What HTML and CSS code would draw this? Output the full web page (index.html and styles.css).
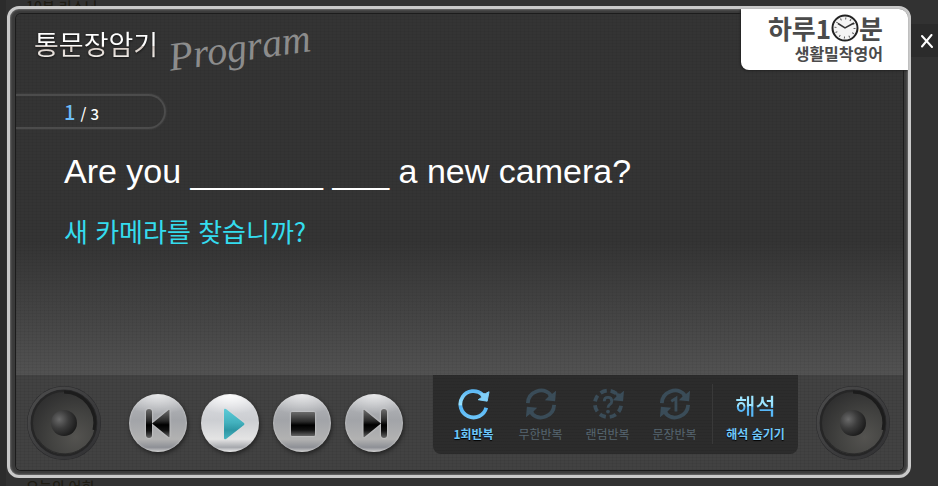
FILE: index.html
```html
<!DOCTYPE html>
<html lang="ko">
<head>
<meta charset="utf-8">
<title>통문장암기 Program</title>
<link rel="stylesheet" href="styles.css">
</head>
<body>
<div class="backdrop">
  <span class="backdrop-top">10분 리스닝</span>
  <span class="backdrop-bottom">오늘의 어휘</span>
</div>
<svg class="defs" width="0" height="0" aria-hidden="true">
  <defs>
    <linearGradient id="blue" x1="0" y1="0" x2="0" y2="1"><stop offset="0" stop-color="#5cb8f4"/><stop offset=".52" stop-color="#9ce4ff"/><stop offset=".56" stop-color="#52b4f6"/><stop offset="1" stop-color="#6cc4f8"/></linearGradient>
    <linearGradient id="ink" x1="0" y1="0" x2="0" y2="1"><stop offset="0" stop-color="#6c6c6c"/><stop offset=".4" stop-color="#2a2a2a"/><stop offset=".55" stop-color="#000"/><stop offset=".75" stop-color="#111"/><stop offset="1" stop-color="#666"/></linearGradient>
    <linearGradient id="teal" x1="0" y1="0" x2="0" y2="1"><stop offset="0" stop-color="#5ccbd8"/><stop offset=".45" stop-color="#43b1be"/><stop offset=".7" stop-color="#2d96a4"/><stop offset="1" stop-color="#48b4c0"/></linearGradient>
    <radialGradient id="cone" cx=".68" cy=".72" r=".75"><stop offset="0" stop-color="#545350"/><stop offset=".5" stop-color="#434341"/><stop offset="1" stop-color="#303030"/></radialGradient>
    <radialGradient id="cap" cx=".32" cy=".36" r=".7"><stop offset="0" stop-color="#6a6a6a"/><stop offset=".5" stop-color="#3c3c3c"/><stop offset="1" stop-color="#1c1c1c"/></radialGradient>
    <linearGradient id="rim" x1="0" y1="0" x2="1" y2="1"><stop offset="0" stop-color="#4c4c4c"/><stop offset="1" stop-color="#303032"/></linearGradient>
    <symbol id="speaker" viewBox="0 0 76 76">
      <circle cx="38" cy="38" r="37" fill="#29292b"/>
      <circle cx="38" cy="38" r="35" fill="none" stroke="url(#rim)" stroke-width="3"/>
      <circle cx="38" cy="38" r="32" fill="url(#cone)" stroke="#262626" stroke-width="2"/>
      <path d="M38 7a31 31 0 0 1 30 38" fill="none" stroke="#1c1c1c" stroke-width="3"/>
      <path d="M12 54a31 31 0 0 0 46 8" fill="none" stroke="#2c2c2c" stroke-width="1"/>
      <circle cx="38" cy="38" r="13" fill="url(#cap)"/>
    </symbol>
  </defs>
</svg>

<main class="player">
  <div class="screen">
    <header class="header">
      <h1 class="title">통문장암기</h1>
      <span class="program">Program</span>
    </header>
    <p class="counter"><span class="current">1</span><span class="total">/ 3</span></p>
    <section class="lesson">
      <p class="sentence">Are you _______ ___ a new camera?</p>
      <p class="translation" lang="ko">새 카메라를 찾습니까?</p>
    </section>
    <footer class="controls">
      <svg class="speaker" aria-hidden="true"><use href="#speaker"/></svg>
      <div class="transport">
        <button class="round" aria-label="이전"><svg viewBox="0 0 58 58"><g class="glow"><rect x="17" y="15" width="6" height="29" rx="3" fill="url(#ink)"/><path d="M23 29.500 39.500 16q1-.5 1 .5v26q0 1-1 .5z" fill="url(#ink)"/></g></svg></button>
        <button class="round active" aria-label="재생"><svg viewBox="0 0 58 58"><path class="glow" d="M23 16q0-2 2-1L43 29q1 1 0 2L25 45q-2 1-2-1z" fill="url(#teal)"/></svg></button>
        <button class="round" aria-label="정지"><svg viewBox="0 0 58 58"><rect class="glow" x="18" y="18" width="24" height="24" rx="1" fill="url(#ink)"/></svg></button>
        <button class="round" aria-label="다음"><svg viewBox="0 0 58 58"><g class="glow"><rect x="36" y="15" width="6" height="29" rx="3" fill="url(#ink)"/><path d="M36 29.500 19.500 16q-1-.5-1 .5v26q0 1 1 .5z" fill="url(#ink)"/></g></svg></button>
      </div>
      <div class="options">
        <div class="modes">
          <button class="mode on">
            <svg viewBox="0 0 36 34"><path d="M27 7A14 14 0 1 0 31 21" fill="none" stroke="url(#blue)" stroke-width="4"/><path d="M34 4 32 14 22.500 12.500 26 10 25 6 30 6z" fill="#80d0fa" stroke="#80d0fa" stroke-linejoin="round"/></svg>
            <span>1회반복</span>
          </button>
          <button class="mode">
            <svg viewBox="0 0 36 34"><g fill="none" stroke="currentColor" stroke-width="4"><path d="M4 16A14 14 0 0 1 28 7"/><path d="M32 18A14 14 0 0 1 8 27"/></g><g fill="currentColor"><path d="M34 3 33 14 22 13 26 9 25 5 30 6z"/><path d="M2 31 3 20 14 21 10 25 11 29 6 28z"/></g></svg>
            <span>무한반복</span>
          </button>
          <button class="mode">
            <svg viewBox="0 0 36 34"><path d="M27 6A14 14 0 1 0 32 18" fill="none" stroke="currentColor" stroke-width="4" stroke-dasharray="7 4"/><path d="M35 3 34 14 23 13 27 9 26 5 31 6z" fill="currentColor"/><path d="M14 14q0-4 4-4t4 4q0 2-2 3.500t-2 3.500" fill="none" stroke="currentColor" stroke-width="3"/><circle cx="18" cy="25" r="2" fill="currentColor"/></svg>
            <span>랜덤반복</span>
          </button>
          <button class="mode">
            <svg viewBox="0 0 36 34"><g fill="none" stroke="currentColor" stroke-width="4"><path d="M4 16A14 14 0 0 1 28 7"/><path d="M32 18A14 14 0 0 1 8 27"/></g><g fill="currentColor"><path d="M34 3 33 14 22 13 26 9 25 5 30 6z"/><path d="M2 31 3 20 14 21 10 25 11 29 6 28z"/></g><path d="M14 14 19 11V25" fill="none" stroke="currentColor" stroke-width="3"/></svg>
            <span>문장반복</span>
          </button>
        </div>
        <button class="meaning"><strong>해석</strong><span>해석 숨기기</span></button>
      </div>
      <svg class="speaker right" aria-hidden="true"><use href="#speaker"/></svg>
    </footer>
  </div>
  <div class="brand">
    <div class="brand-main"><span>하루1</span><svg class="clock" viewBox="0 0 28 28" aria-hidden="true"><circle cx="14" cy="14" r="12.500" fill="#f4f4f4" stroke="#222" stroke-width="2"/><circle cx="14" cy="14" r="9.500" fill="none" stroke="#555" stroke-width="2" stroke-dasharray="1 3.974"/><path d="M7 9.500 14 14 23 9" fill="none" stroke="#333" stroke-width="1.500"/></svg><span>분</span></div>
    <div class="brand-sub">생활밀착영어</div>
  </div>
</main>
<button class="close" aria-label="닫기"><svg viewBox="0 0 12 14"><path d="M1 2 11 13M10.500 1 1 12.500" stroke="#fff" stroke-width="2" stroke-linecap="round"/></svg></button>
</body>
</html>
```

FILE: styles.css
```css
* { box-sizing: border-box; }

body {
  margin: 0;
  height: 100vh;
  min-height: 400px;
  display: flex;
  align-items: flex-start;
  overflow: hidden;
  position: relative;
  background: #323232;
  color: #fff;
  font-family: "Noto Sans CJK KR", sans-serif;
}

h1, p { margin: 0; }

button {
  margin: 0;
  padding: 0;
  border: 0;
  background: none;
  color: inherit;
  font-family: inherit;
  cursor: pointer;
}

.defs { position: absolute; }

.backdrop {
  position: absolute;
  inset: 0;
  overflow: hidden;
  border-left: 6px solid #2c2c2c;
  color: #1e1c14;
  font-size: 14px;
  font-weight: 500;
  line-height: 20px;
}

.backdrop-top { position: absolute; left: 20px; top: -4px; }
.backdrop-bottom { position: absolute; left: 20px; bottom: -10px; }

.player {
  position: relative;
  flex: 1;
  align-self: stretch;
  display: flex;
  margin: 6px 0 8px 7px;
  padding: 5px 5px 5px 6px;
  border: 3px solid #c9c9c9;
  border-radius: 12px;
  background: #3a3a3a;
  box-shadow: inset 0 0 2px 1px #6a6a6a;
}

.screen {
  flex: 1;
  display: flex;
  flex-direction: column;
  border-radius: 5px;
  overflow: hidden;
  box-shadow: 0 0 0 1px #1c1c1c;
  background:
    repeating-linear-gradient(0deg, rgba(0, 0, 0, .04) 0 1px, transparent 1px 3px),
    repeating-linear-gradient(90deg, rgba(0, 0, 0, .04) 0 1px, transparent 1px 4px),
    linear-gradient(#343434 0, #343434 50%, #535353 80%);
}

.header {
  display: flex;
  align-items: flex-start;
  gap: 10px;
  height: 80px;
  padding: 10px 18px;
}

.title {
  font-size: 27px;
  font-weight: 400;
  line-height: 40px;
  background: linear-gradient(#fff 54%, #d4c9c2 56%, #f2eeea 85%);
  -webkit-background-clip: text;
  background-clip: text;
  color: transparent;
  filter: drop-shadow(0 1px 1px #111);
}

.program {
  font: italic 40px/48px "Liberation Serif", serif;
  color: #8c8c8c;
  transform: rotate(-8deg);
}

.counter {
  display: flex;
  align-items: baseline;
  gap: 5px;
  width: 150px;
  height: 35px;
  padding-left: 48px;
  border: 2px solid #4c4c4c;
  border-left: 0;
  border-radius: 0 18px 18px 0;
  box-shadow: 0 0 2px #4c4c4c;
  line-height: 31px;
}

.current { font-size: 20px; font-weight: 500; color: #6cbcf6; }
.total { font-size: 15px; font-weight: 500; }

.lesson { flex: 1; padding: 22px 48px; }

.sentence { font: 34px/40px "Liberation Sans", Arial, sans-serif; }

.translation {
  margin-top: 20px;
  font-size: 26px;
  font-weight: 400;
  line-height: 40px;
  color: #34dcee;
}

.controls {
  display: flex;
  align-items: flex-start;
  height: 95px;
  padding: 0 12px 0 10px;
  background:
    repeating-linear-gradient(0deg, rgba(0, 0, 0, .05) 0 1px, transparent 1px 3px),
    repeating-linear-gradient(90deg, rgba(0, 0, 0, .05) 0 1px, transparent 1px 4px),
    #424242;
}

.speaker { flex: none; width: 76px; height: 76px; margin-top: 10px; }
.speaker.right { margin-left: auto; }

.transport { display: flex; gap: 14px; margin: 19px 30px 0 27px; }

.round {
  width: 58px;
  height: 58px;
  border-radius: 50%;
  background:
    radial-gradient(ellipse 70% 35% at 50% 0, rgba(255, 255, 255, .7), transparent),
    linear-gradient(#b8babe, #a2a4a8 45%, #b2b2b2 78%, #8e9096 92%, #ccc);
  box-shadow: inset 0 0 2px #ddd, 1px 2px 4px #222;
}

.round.active {
  background:
    radial-gradient(ellipse 70% 35% at 50% 0, #fff, transparent),
    linear-gradient(#dcdde1, #ccced2 45%, #e4e4e4 78%, #a6a8ad 92%, #eee);
}

.round svg { display: block; width: 58px; height: 58px; }
.glow { filter: drop-shadow(0 0 1px #ddd); }

.options {
  display: flex;
  height: 79px;
  padding: 9px 0 10px 7px;
  border-radius: 0 0 8px 8px;
  background:
    repeating-linear-gradient(0deg, rgba(0, 0, 0, .06) 0 1px, transparent 1px 3px),
    #2c2c2c;
}

.modes { display: flex; border-right: 1px solid #393939; padding-right: 4px; }

.mode {
  display: flex;
  flex-direction: column;
  align-items: center;
  gap: 4px;
  width: 67px;
  padding-top: 4px;
  color: #3a4c58;
  font-size: 12px;
  line-height: 20px;
}

.mode svg { width: 36px; height: 34px; }
.mode span { color: #566670; }

.mode.on span {
  color: #6cc6fa;
  font-weight: 700;
  text-shadow: 0 1px 1px #000;
}

.meaning {
  display: flex;
  flex-direction: column;
  align-items: center;
  width: 85px;
  color: #70c8fa;
  font-size: 12px;
  font-weight: 700;
  line-height: 20px;
  text-shadow: 0 1px 1px #000;
}

.meaning strong {
  font-size: 22px;
  line-height: 40px;
  font-weight: 500;
  background: linear-gradient(#9ce4ff 55%, #58b8f8 58%);
  -webkit-background-clip: text;
  background-clip: text;
  color: transparent;
  text-shadow: none;
}

.brand {
  position: absolute;
  top: 0;
  right: 0;
  width: 167px;
  padding: 4px 25px 6px 0;
  border-radius: 0 9px 0 8px;
  background: #fff;
  color: #4b4b4b;
  box-shadow: -1px 1px 2px #222;
  font-weight: 700;
  text-align: right;
}

.brand-main {
  display: flex;
  justify-content: flex-end;
  align-items: center;
  font-size: 26px;
  line-height: 30px;
}

.clock { width: 28px; height: 28px; }
.brand-sub { font-size: 16px; line-height: 21px; }

.close {
  flex: none;
  width: 27px;
  height: 33px;
  margin-top: 24px;
  padding-left: 4px;
  background: #2b2b2b;
  position: relative;
}

.close svg { width: 12px; height: 14px; display: block; margin: 0 auto; }
```
